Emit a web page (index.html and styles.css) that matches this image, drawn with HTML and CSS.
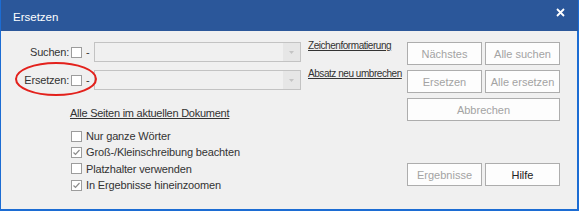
FILE: index.html
```html
<!DOCTYPE html>
<html lang="de">
<head>
<meta charset="utf-8">
<title>Ersetzen</title>
<link rel="stylesheet" href="styles.css">
</head>
<body>
<div class="window">
  <div class="titlebar">
    <span class="title">Ersetzen</span>
    <svg class="close" width="9" height="9" viewBox="0 0 9 9"><path d="M1 1L8 8M8 1L1 8" stroke="#fff" stroke-width="1.8" fill="none"/></svg>
  </div>
  <div class="content">
    <div class="left">
      <div class="field-row">
        <span class="label">Suchen:</span>
        <span class="box"></span>
        <span class="dash">-</span>
        <span class="combo"><span class="combo-arrow"><svg width="5" height="3" viewBox="0 0 5 3"><path d="M0 0H5L2.5 3Z" fill="#c4c4c4"/></svg></span></span>
        <a class="link small">Zeichenformatierung</a>
      </div>
      <div class="field-row second">
        <span class="label">Ersetzen:</span>
        <span class="box"></span>
        <span class="dash">-</span>
        <span class="combo"><span class="combo-arrow"><svg width="5" height="3" viewBox="0 0 5 3"><path d="M0 0H5L2.5 3Z" fill="#c4c4c4"/></svg></span></span>
        <a class="link small">Absatz neu umbrechen</a>
      </div>
      <div class="scope"><a class="link">Alle Seiten im aktuellen Dokument</a></div>
      <div class="options">
        <div class="option"><span class="box"></span><span>Nur ganze Wörter</span></div>
        <div class="option"><span class="box checked"><svg width="9" height="9" viewBox="0 0 9 9"><path d="M1.5 4.5L3.5 6.5L7.5 2" stroke="#8c8c8c" stroke-width="1.2" fill="none"/></svg></span><span>Groß-/Kleinschreibung beachten</span></div>
        <div class="option"><span class="box"></span><span>Platzhalter verwenden</span></div>
        <div class="option"><span class="box checked"><svg width="9" height="9" viewBox="0 0 9 9"><path d="M1.5 4.5L3.5 6.5L7.5 2" stroke="#8c8c8c" stroke-width="1.2" fill="none"/></svg></span><span>In Ergebnisse hineinzoomen</span></div>
      </div>
    </div>
    <div class="right">
      <div class="btn-row">
        <button class="btn disabled">Nächstes</button>
        <button class="btn disabled">Alle suchen</button>
      </div>
      <div class="btn-row">
        <button class="btn disabled">Ersetzen</button>
        <button class="btn disabled">Alle ersetzen</button>
      </div>
      <div class="btn-row">
        <button class="btn wide disabled">Abbrechen</button>
      </div>
      <div class="btn-row bottom">
        <button class="btn disabled">Ergebnisse</button>
        <button class="btn">Hilfe</button>
      </div>
    </div>
  </div>
  <svg class="annotation" width="84" height="36" viewBox="0 0 84 36"><ellipse cx="42" cy="18" rx="40" ry="16" stroke="#e3211c" stroke-width="2" fill="none"/></svg>
</div>
</body>
</html>
```
FILE: styles.css
```css
* { box-sizing: border-box; }
html, body { margin: 0; padding: 0; }
body {
  font-family: "Liberation Sans", Arial, sans-serif;
  font-size: 11px;
  color: #333;
  background: #f0f0f0;
}
.window {
  position: relative;
  width: 579px;
  height: 211px;
  background: #f0f0f0;
  border-style: solid;
  border-color: #1c6cd3;
  border-width: 0 2px 2px 1px;
}
.titlebar {
  height: 31px;
  background: #2b579a;
  display: flex;
  align-items: center;
  justify-content: space-between;
  padding: 2px 13px 0 12px;
  margin-right: -1px;
}
.title {
  color: #fff;
  font-size: 11.5px;
}
.close { margin-top: -9px; }
.content {
  display: flex;
  padding-top: 11px;
}
.left { width: 406px; flex: none; }
.field-row {
  display: flex;
  align-items: center;
  height: 20px;
}
.field-row.second { margin-top: 8px; }
.label {
  width: 68px;
  flex: none;
  text-align: right;
  line-height: 14px;
  letter-spacing: -0.2px;
}
.box {
  width: 11px;
  height: 11px;
  border: 1px solid #9c9c9c;
  background: #fff;
  display: inline-flex;
  align-items: center;
  justify-content: center;
  flex: none;
}
.field-row .box { margin-left: 2px; }
.dash {
  width: 12px;
  flex: none;
  padding-left: 4px;
}
.combo {
  width: 207px;
  height: 20px;
  flex: none;
  border: 1px solid #c3c3c3;
  background: #f0f0f0;
  display: flex;
  justify-content: flex-end;
}
.combo-arrow {
  width: 17px;
  height: 18px;
  background: #e6e6e6;
  display: flex;
  align-items: center;
  justify-content: center;
}
.link {
  color: #333;
  text-decoration: underline;
  line-height: 14px;
  margin-left: 7px;
  align-self: flex-start;
  margin-top: -3px;
  white-space: nowrap;
}
.link.small {
  font-size: 10px;
  letter-spacing: -0.45px;
}
.scope {
  margin: 16px 0 0 69px;
}
.scope .link {
  margin-left: 0;
  letter-spacing: -0.25px;
}
.options {
  margin: 8px 0 0 70px;
}
.option {
  display: flex;
  align-items: center;
  height: 16.3px;
  line-height: 14px;
  letter-spacing: -0.15px;
}
.option .box { margin-right: 4px; }
.right { width: 153px; flex: none; }
.btn-row {
  display: flex;
  gap: 3px;
  margin-bottom: 5px;
}
.btn-row.bottom { margin-top: 42px; }
.btn {
  width: 75px;
  height: 23px;
  border: 1px solid #adadad;
  background: #fdfdfd;
  font: inherit;
  color: #222;
  padding: 0;
}
.btn.wide { width: 153px; }
.btn.disabled { color: #a3a3a3; }
.annotation {
  position: absolute;
  left: 13px;
  top: 61px;
}
```
